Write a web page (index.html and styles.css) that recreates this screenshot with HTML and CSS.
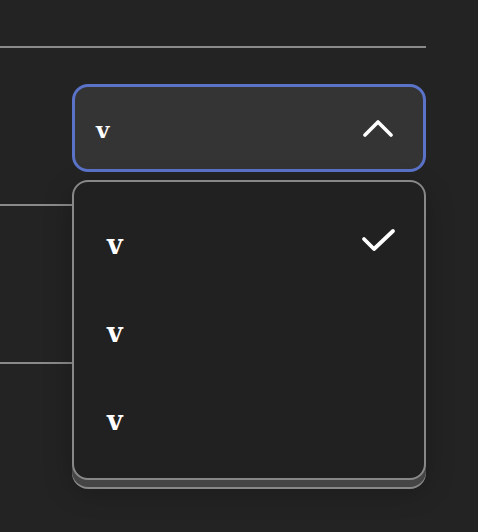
FILE: index.html
```html
<!DOCTYPE html>
<html>
<head>
<meta charset="utf-8">
<link rel="stylesheet" href="styles.css">
</head>
<body>
<div class="table">
  <div class="row row-head"></div>
  <div class="row">
    <div class="select-wrap">
      <div class="select">
        <span class="select-value">v</span>
        <svg class="chevron" width="30" height="18" viewBox="0 0 30 18"><polyline points="2,16 15,3 28,16" fill="none" stroke="#fff" stroke-width="3.6" stroke-linecap="round" stroke-linejoin="round"/></svg>
      </div>
      <div class="menu">
        <div class="option"><span>v</span>
          <svg class="check" width="36" height="28" viewBox="0 0 36 28"><polyline points="3,12 13,22 32,4" fill="none" stroke="#fff" stroke-width="3.8" stroke-linecap="round" stroke-linejoin="round"/></svg>
        </div>
        <div class="option"><span>v</span></div>
        <div class="option"><span>v</span></div>
      </div>
    </div>
  </div>
  <div class="row"></div>
</div>
</body>
</html>
```

FILE: styles.css
```css
html, body {
  margin: 0;
  padding: 0;
  background: #232323;
  height: 100%;
}
body {
  font-family: "DejaVu Serif", serif;
  color: #fff;
}
.table {
  width: 426px;
}
.row {
  height: 156px;
  border-bottom: 2px solid #8a8a8a;
}
.row-head {
  height: 46px;
}
.select-wrap {
  position: relative;
  margin-left: 72px;
  padding-top: 36px;
  width: 354px;
}
.select {
  box-sizing: border-box;
  height: 88px;
  border: 3px solid #5a72c8;
  border-radius: 16px;
  background: #343434;
  display: flex;
  align-items: center;
  justify-content: space-between;
  padding: 0 30px 0 21px;
}
.select-value {
  font-family: "DejaVu Serif", serif;
  font-weight: bold;
  font-size: 23px;
  line-height: 1;
  margin-top: 2px;
}
.chevron {
  display: block;
}
.menu {
  position: absolute;
  left: 0;
  top: 132px;
  box-sizing: border-box;
  width: 354px;
  height: 300px;
  border: 2px solid #888;
  border-radius: 16px;
  background: #212121;
  padding: 18px 0 14px;
  display: flex;
  flex-direction: column;
  box-shadow: 0 7px 0 0 #454545, 0 9px 0 0 #888, 0 10px 28px rgba(0,0,0,0.25);
  z-index: 2;
}
.option {
  height: 88px;
  display: flex;
  align-items: center;
  justify-content: space-between;
  padding: 0 27px 0 33px;
  font-family: "DejaVu Serif", serif;
  font-weight: bold;
  font-size: 27px;
  line-height: 1;
}
.check {
  display: block;
  margin-top: -6px;
}
```
